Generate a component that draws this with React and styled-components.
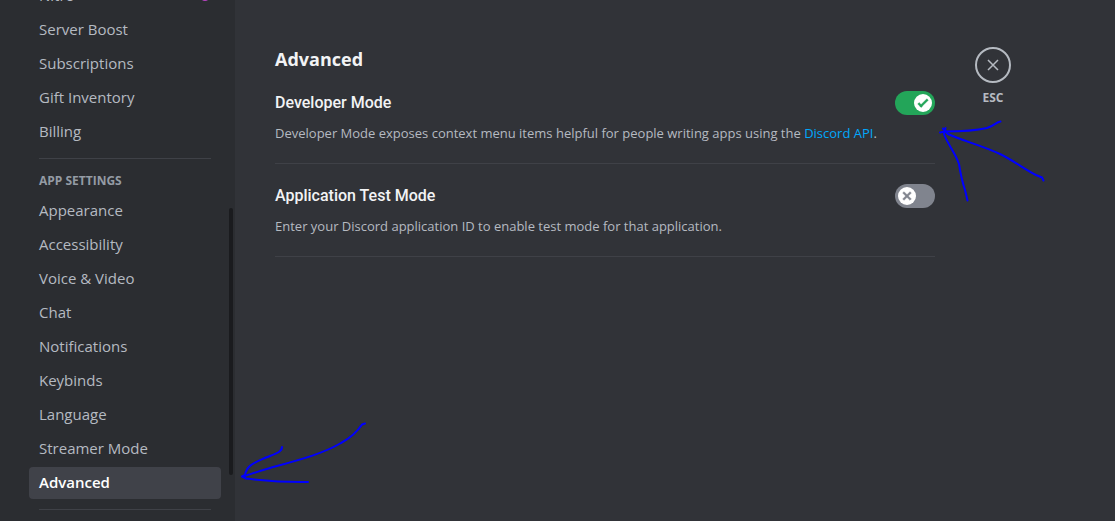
import React from "react";
import styled, { createGlobalStyle } from "styled-components";

const GlobalStyle = createGlobalStyle`
  *, *::before, *::after { box-sizing: border-box; }
  body {
    margin: 0;
    background: #313338;
    color: #b5bac1;
    font-family: "Open Sans", "Noto Sans", sans-serif;
    font-size: 15px;
  }
`;

const Page = styled.div`
  position: relative;
  display: flex;
  height: 100vh;
  overflow: hidden;
`;

const Sidebar = styled.aside`
  flex: 0 0 235px;
  display: flex;
  justify-content: space-between;
  padding: 0 2px 0 29px;
  background: #2b2d31;
  overflow: hidden;
`;

const Nav = styled.nav`
  flex: 0 0 192px;
  display: flex;
  flex-direction: column;
  gap: 2px;
  margin-top: -20px;
`;

const NavItem = styled.a`
  flex: none;
  display: flex;
  align-items: center;
  justify-content: space-between;
  height: 32px;
  padding: 0 10px 2px;
  border-radius: 4px;
  font-weight: ${(p) => (p.$active ? 600 : 500)};
  line-height: 20px;
  text-decoration: none;
  color: ${(p) => (p.$active ? "#ffffff" : "#b5bac1")};
  background: ${(p) => (p.$active ? "#404249" : "transparent")};
`;

const NavDivider = styled.hr`
  flex: none;
  width: auto;
  height: 1px;
  margin: 8px 10px 6px;
  border: 0;
  background: #3f4147;
`;

const NavHeading = styled.h2`
  flex: none;
  margin: 0 0 -2px;
  padding: 6px 10px;
  font-size: 12px;
  font-weight: 700;
  line-height: 16px;
  color: #949ba4;
`;

const ScrollTrack = styled.div`
  flex: 0 0 4px;
  display: grid;
  grid-template-rows: 208fr 267fr 46fr;
`;

const ScrollThumb = styled.div`
  grid-row: 2;
  border-radius: 2px;
  background: #1a1b1e;
`;

const Content = styled.main`
  flex: 1;
  min-width: 0;
  display: flex;
  align-items: flex-start;
  gap: 40px;
  padding: 47px 40px 0;
`;

const Settings = styled.section`
  flex: 0 1 660px;
`;

const Title = styled.h1`
  margin: 0 0 20px;
  font-size: 18px;
  font-weight: 700;
  line-height: 24px;
  color: #f2f3f5;
`;

const Setting = styled.div`
  margin-bottom: 20px;
  padding-bottom: 20px;
  border-bottom: 1px solid #3f4147;
`;

const SettingHead = styled.div`
  display: flex;
  justify-content: space-between;
  gap: 16px;
  margin-bottom: 8px;
`;

const SettingLabel = styled.label`
  font-family: Roboto, "Noto Sans", sans-serif;
  font-size: 16px;
  font-weight: 500;
  line-height: 24px;
  color: #f2f3f5;
`;

const Description = styled.p`
  margin: 0;
  font-size: 13px;
  line-height: 20px;
`;

const Link = styled.a`
  color: #00a8fc;
  text-decoration: none;
`;

const Switch = styled.span`
  position: relative;
  flex: 0 0 40px;
  display: flex;
  align-items: center;
  justify-content: ${(p) => (p.$on ? "flex-end" : "flex-start")};
  height: 24px;
  padding: 0 3px;
  border-radius: 12px;
  background: ${(p) => (p.$on ? "#23a559" : "#80848e")};
  color: ${(p) => (p.$on ? "#23a559" : "#80848e")};
`;

const SwitchInput = styled.input`
  position: absolute;
  inset: 0;
  width: 100%;
  height: 100%;
  margin: 0;
  opacity: 0;
  cursor: pointer;
`;

const CloseButton = styled.button`
  flex: none;
  display: flex;
  flex-direction: column;
  align-items: center;
  gap: 7px;
  width: 36px;
  padding: 0;
  border: 0;
  background: none;
  color: #b5bac1;
  font: inherit;
  font-size: 12px;
  font-weight: 700;
  line-height: 16px;
  cursor: pointer;
`;

const CloseRing = styled.span`
  display: grid;
  place-items: center;
  width: 36px;
  height: 36px;
  border: 2px solid #b5bac1;
  border-radius: 50%;
`;

const Annotations = styled.svg`
  position: absolute;
  top: 0;
  left: 0;
  pointer-events: none;
`;

const billingItems = ["Server Boost", "Subscriptions", "Gift Inventory", "Billing"];
const appItems = [
  "Appearance",
  "Accessibility",
  "Voice & Video",
  "Chat",
  "Notifications",
  "Keybinds",
  "Language",
  "Streamer Mode",
  "Advanced",
];

function NitroIcon() {
  return (
    <svg width="12" height="12" viewBox="0 0 12 12" aria-hidden="true">
      <circle cx="6" cy="7" r="5" fill="#b845c1" />
    </svg>
  );
}

function Knob({ on }) {
  return (
    <svg width="18" height="18" viewBox="0 0 20 20" aria-hidden="true">
      <circle cx="10" cy="10" r="10" fill="#fff" />
      {on ? (
        <g fill="currentColor" stroke="currentColor" strokeWidth="0.400">
          <path d="M7.896 14.854L6.305 13.263L14.31 5.258L15.901 6.849L7.896 14.854Z" />
          <path d="M4.086 11.09L5.677 9.499L9.449 13.27L7.858 14.861L4.086 11.09Z" />
        </g>
      ) : (
        <g fill="currentColor" stroke="currentColor" strokeWidth="0.400">
          <path d="M5.132 6.73L6.723 5.139L14.855 13.27L13.264 14.861L5.132 6.73Z" />
          <path d="M13.27 5.139L14.861 6.73L6.73 14.861L5.139 13.27L13.27 5.139Z" />
        </g>
      )}
    </svg>
  );
}

function Toggle({ id, defaultOn }) {
  const [on, setOn] = React.useState(defaultOn);
  return (
    <Switch $on={on}>
      <Knob on={on} />
      <SwitchInput id={id} type="checkbox" role="switch" checked={on} onChange={() => setOn(!on)} />
    </Switch>
  );
}

function SettingRow({ id, label, defaultOn, children }) {
  return (
    <Setting>
      <SettingHead>
        <SettingLabel htmlFor={id}>{label}</SettingLabel>
        <Toggle id={id} defaultOn={defaultOn} />
      </SettingHead>
      <Description>{children}</Description>
    </Setting>
  );
}

function Arrows() {
  return (
    <Annotations
      width="1115"
      height="521"
      viewBox="0 0 1115 521"
      fill="none"
      stroke="#0000ff"
      strokeWidth="2"
      strokeLinecap="round"
      strokeLinejoin="round"
      aria-hidden="true"
    >
      <path d="M365 423.500L362 424.500C359 429 354 436 341 443C324 453 303 459 277 466C264 469.500 254 473 243 476.500" />
      <path d="M282 447C282 452 276 453.500 266 457.500C254 463 247 465 245 475L242 476.500L246 478.500C262 480.500 279 482.500 308 482" />
      <path d="M1000.500 121.500C996 122 995 125.500 987 128C974 131 958 131.500 945 131.500L940 132.500" />
      <path d="M943 128.500L948 134C963 141 984 146 1001 154.500C1014 161 1026 170 1036 175L1042 177.500L1043.500 180.500" />
      <path d="M945.500 128L944 134C948 145 955 152 959 164C961 177 963 184 965 190L967.500 200.500" />
    </Annotations>
  );
}

export default function App() {
  return (
    <>
      <GlobalStyle />
      <Page>
        <Sidebar>
          <Nav aria-label="Settings">
            <NavItem href="#nitro">
              Nitro
              <NitroIcon />
            </NavItem>
            {billingItems.map((name) => (
              <NavItem key={name} href="#billing">
                {name}
              </NavItem>
            ))}
            <NavDivider />
            <NavHeading>APP SETTINGS</NavHeading>
            {appItems.map((name) => (
              <NavItem key={name} href="#app" $active={name === "Advanced"}>
                {name}
              </NavItem>
            ))}
            <NavDivider />
          </Nav>
          <ScrollTrack>
            <ScrollThumb />
          </ScrollTrack>
        </Sidebar>
        <Content>
          <Settings>
            <Title>Advanced</Title>
            <SettingRow id="developer-mode" label="Developer Mode" defaultOn={true}>
              Developer Mode exposes context menu items helpful for people writing apps using the{" "}
              <Link href="#discord-api">Discord API</Link>.
            </SettingRow>
            <SettingRow id="test-mode" label="Application Test Mode" defaultOn={false}>
              Enter your Discord application ID to enable test mode for that application.
            </SettingRow>
          </Settings>
          <CloseButton type="button">
            <CloseRing>
              <svg width="18" height="18" viewBox="0 0 18 18" stroke="currentColor" strokeWidth="1.500" aria-hidden="true">
                <path d="M4 4L14 14M14 4L4 14" />
              </svg>
            </CloseRing>
            ESC
          </CloseButton>
        </Content>
        <Arrows />
      </Page>
    </>
  );
}
